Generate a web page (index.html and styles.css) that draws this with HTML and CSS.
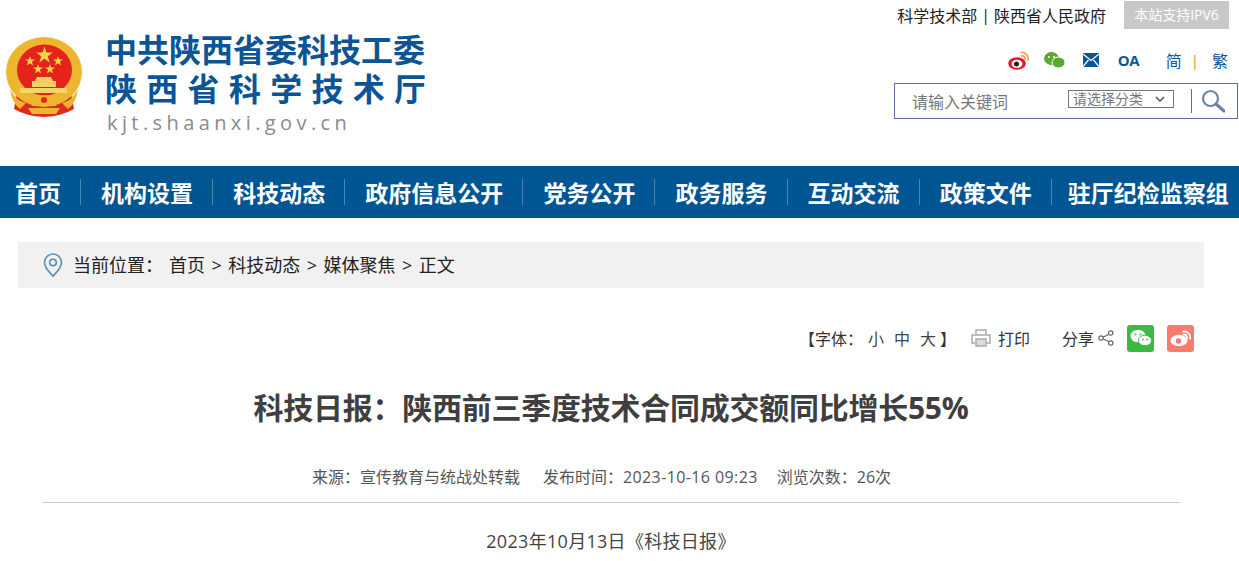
FILE: index.html
```html
<!doctype html>
<html lang="zh-CN">
<head>
    <meta charset="UTF-8">
    <meta name="viewport" content="width=device-width, initial-scale=1.0">
    <title>科技日报：陕西前三季度技术合同成交额同比增长55%</title>
    <link rel="stylesheet" href="styles.css">
</head>
<body>
    <header class="header">
        <div class="logo">
            <svg class="emblem" viewBox="0 0 76 82" width="76" height="82">
                <defs>
                    <path id="star" d="M0-10l2.400 7.100h7.500l-6 4.500 2.200 7.200-6.100-4.300-6.100 4.300 2.200-7.200-6-4.500h7.500z"/>
                </defs>
                <path d="M11 56 L8 72 Q20 79 38 80 Q56 79 68 72 L65 56 Z" fill="#e2271b"/>
                <ellipse cx="38" cy="35" rx="38" ry="35" fill="#eeb52f"/>
                <path d="M4 52 Q10 64 20 66 L14 72 Q6 66 4 52z M72 52 Q66 64 56 66 L62 72 Q70 66 72 52z" fill="#eeb52f"/>
                <ellipse cx="38.500" cy="33" rx="27.500" ry="25.500" fill="#e5231a"/>
                <use href="#star" transform="translate(38.500 18) scale(.85)" fill="#f8d24a"/>
                <use href="#star" transform="translate(24 24) scale(.5)" fill="#f8d24a"/>
                <use href="#star" transform="translate(52 24) scale(.5)" fill="#f8d24a"/>
                <use href="#star" transform="translate(32 32) scale(.5)" fill="#f8d24a"/>
                <use href="#star" transform="translate(44 32) scale(.5)" fill="#f8d24a"/>
                <path d="M29 44l2-4h14l2 4h3v6H26v-6z" fill="#f3cf66"/>
                <path d="M14 51h47v5H14z" fill="#f5d469"/>
                <path d="M24 64 C29 56 47 56 52 64 L50 69 H26 Z" fill="#eeb52f"/>
                <path d="M22 71h32l-4 6H26z" fill="#eeb52f"/>
                <circle cx="38" cy="63" r="3" fill="#e2271b"/>
            </svg>
            <div class="logo-text">
                <div class="logo-line">中共陕西省委科技工委</div>
                <div class="logo-line logo-line-wide">陕西省科学技术厅</div>
                <div class="logo-url">kjt.shaanxi.gov.cn</div>
            </div>
        </div>
        <div class="header-right">
            <div class="top-links">
                <span>科学技术部</span>
                <span class="top-sep">|</span>
                <span>陕西省人民政府</span>
                <span class="ipv6">本站支持IPV6</span>
            </div>
            <div class="social">
                <svg class="icon-weibo" viewBox="0 0 21 19" width="21" height="19">
                    <ellipse cx="9" cy="12.500" rx="8.800" ry="6.200" fill="#e6162d"/>
                    <ellipse cx="9" cy="12.800" rx="5.500" ry="4" fill="#fff"/>
                    <circle cx="8.500" cy="13" r="2.500" fill="#222"/>
                    <path d="M13 1.500a6.200 6.200 0 0 1 7 7.500M13.500 4.800a3 3 0 0 1 3.500 3.700" fill="none" stroke="#f3a04a" stroke-width="1.700" stroke-linecap="round"/>
                </svg>
                <svg class="icon-wechat" viewBox="0 0 21 16" width="21" height="16">
                    <ellipse cx="7.500" cy="6.500" rx="7.500" ry="6.500" fill="#5aa82f"/>
                    <ellipse cx="14.500" cy="10.500" rx="6.500" ry="5.500" fill="#5aa82f" stroke="#fff" stroke-width="1"/>
                    <circle cx="5" cy="5" r="1" fill="#fff"/>
                    <circle cx="10" cy="5" r="1" fill="#fff"/>
                </svg>
                <svg class="icon-mail" viewBox="0 0 16 14" width="16" height="14">
                    <path d="M0 0h16v14H0z" fill="#0b5595"/>
                    <path d="M0 1l8 6.500L16 1M0 13.500l5.500-6.500M16 13.500L10.500 7" fill="none" stroke="#fff" stroke-width="1.300"/>
                </svg>
                <span class="oa">OA</span>
                <span class="lang">简</span>
                <span class="lang-sep">|</span>
                <span class="lang lang-last">繁</span>
            </div>
            <div class="search">
                <span class="search-input">请输入关键词</span>
                <span class="search-select">请选择分类
                    <svg viewBox="0 0 10 6" width="10" height="6"><path d="M1 1l4 4 4-4" fill="none" stroke="#555" stroke-width="1.500"/></svg>
                </span>
                <span class="search-btn">
                    <svg viewBox="0 0 24 24" width="24" height="24">
                        <circle cx="9.500" cy="9.500" r="7.500" fill="none" stroke="#6f83a8" stroke-width="2.200"/>
                        <path d="M15 15l8 7" stroke="#6f83a8" stroke-width="3.200" stroke-linecap="round"/>
                    </svg>
                </span>
            </div>
        </div>
    </header>

    <nav class="nav">
        <a class="nav-item" href="#">首页</a>
        <a class="nav-item" href="#">机构设置</a>
        <a class="nav-item" href="#">科技动态</a>
        <a class="nav-item" href="#">政府信息公开</a>
        <a class="nav-item" href="#">党务公开</a>
        <a class="nav-item" href="#">政务服务</a>
        <a class="nav-item" href="#">互动交流</a>
        <a class="nav-item" href="#">政策文件</a>
        <a class="nav-item" href="#">驻厅纪检监察组</a>
    </nav>

    <div class="crumb">
        <svg viewBox="0 0 20 24" width="20" height="24">
            <path d="M10 1a8.500 8.500 0 0 0-8.500 8.500C1.500 15 7 20 10 23c3-3 8.500-8 8.500-13.500A8.500 8.500 0 0 0 10 1z" fill="none" stroke="#5c8db5" stroke-width="1.600"/>
            <circle cx="10" cy="9.500" r="3.300" fill="none" stroke="#5c8db5" stroke-width="1.600"/>
        </svg>
        <span class="crumb-label">当前位置：</span>
        <span class="crumb-path">首页 &gt; 科技动态 &gt; 媒体聚焦 &gt; 正文</span>
    </div>

    <div class="tools">
        <span class="font-size">【字体：<span class="font-opts">小</span><span class="font-opts">中</span><span class="font-opts">大</span><span class="font-end">】</span></span>
        <svg class="print-icon" viewBox="0 0 20 18" width="20" height="18">
            <path d="M5 5V1h10v4M4 14H1V6h18v8h-3" fill="none" stroke="#aaa" stroke-width="1.500"/>
            <path d="M5 10h10v7H5z" fill="#ddd" stroke="#aaa" stroke-width="1.500"/>
        </svg>
        <span class="print">打印</span>
        <span class="share">分享</span>
        <svg class="share-icon" viewBox="0 0 16 16" width="16" height="16">
            <path d="M12.500 3.500L3.500 8l9 4.500" fill="none" stroke="#666" stroke-width="1.200"/>
            <circle cx="12.700" cy="3" r="2.200" fill="#fff" stroke="#666" stroke-width="1.200"/>
            <circle cx="3" cy="8" r="2.200" fill="#fff" stroke="#666" stroke-width="1.200"/>
            <circle cx="12.700" cy="13" r="2.200" fill="#fff" stroke="#666" stroke-width="1.200"/>
        </svg>
        <span class="share-btn share-wechat">
            <svg viewBox="0 0 22 18" width="22" height="18">
                <ellipse cx="8" cy="7" rx="7.500" ry="6.300" fill="#fff"/>
                <ellipse cx="15" cy="11.500" rx="6.500" ry="5.300" fill="#fff" stroke="#3bba3f" stroke-width="1"/>
                <circle cx="5.500" cy="5.500" r="1" fill="#3bba3f"/>
                <circle cx="10.500" cy="5.500" r="1" fill="#3bba3f"/>
                <circle cx="13" cy="10.500" r=".9" fill="#3bba3f"/>
                <circle cx="17" cy="10.500" r=".9" fill="#3bba3f"/>
            </svg>
        </span>
        <span class="share-btn share-weibo">
            <svg viewBox="0 0 22 18" width="22" height="18">
                <ellipse cx="9" cy="11.500" rx="8.500" ry="5.800" fill="#fff"/>
                <circle cx="8.500" cy="12" r="2.800" fill="#f97b6c"/>
                <path d="M13 2.500a6 6 0 0 1 7 7.500M13.500 5.500a3 3 0 0 1 3.500 3.700" fill="none" stroke="#fff" stroke-width="1.700" stroke-linecap="round"/>
            </svg>
        </span>
    </div>

    <main class="article">
        <h1 class="title">科技日报：陕西前三季度技术合同成交额同比增长55%</h1>
        <div class="meta">
            <span>来源：宣传教育与统战处转载</span>
            <span>发布时间：<span class="meta-date">2023-10-16 09:23</span></span>
            <span class="meta-views">浏览次数：26次</span>
        </div>
        <p class="lead">2023年10月13日《科技日报》</p>
    </main>
</body>
</html>
```

FILE: styles.css
```css
* {
    box-sizing: border-box;
}

html,
body {
    height: 561px;
    overflow: hidden;
}

body {
    margin: 0;
    background: #fff;
    color: #333;
    font-family: "Open Sans", "Noto Sans CJK SC", sans-serif;
    font-size: 16px;
}

a {
    color: inherit;
    text-decoration: none;
}

/* header */
.header {
    display: flex;
    justify-content: space-between;
    height: 166px;
}

.logo {
    display: flex;
    flex-shrink: 0;
    padding: 33px 0 0 6px;
}

.emblem {
    margin-top: 4px;
}

.logo-text {
    margin-left: 23px;
    color: #0b5595;
    font-family: "Liberation Sans", "Noto Sans CJK SC", sans-serif;
    font-weight: 700;
}

.logo-line {
    height: 36px;
    font-size: 32px;
    line-height: 36px;
    white-space: nowrap;
}

.logo-line-wide {
    margin-top: 3px;
    letter-spacing: 9.300px;
}

.logo-url {
    margin: 1px 0 0 2px;
    color: #8a8a8a;
    font-family: "Open Sans", sans-serif;
    font-size: 20px;
    font-weight: 400;
    line-height: 28px;
    letter-spacing: 4.400px;
}

.header-right {
    display: flex;
    flex-direction: column;
    flex-shrink: 0;
    align-items: flex-end;
    width: 345px;
    padding: 1px 1px 0 0;
}

.top-links {
    display: flex;
    align-items: center;
    height: 28px;
    padding-right: 9px;
    color: #222;
    font-size: 16px;
    white-space: nowrap;
}

.top-sep {
    margin: 0 4px;
}

.ipv6 {
    width: 105px;
    height: 28px;
    margin-left: 18px;
    background: #c8c8c8;
    color: #fff;
    font-size: 14px;
    line-height: 28px;
    text-align: center;
}

.social {
    display: flex;
    align-items: center;
    height: 24px;
    margin-top: 19px;
    padding-right: 10px;
    color: #0b5595;
}

.icon-weibo {
    margin-right: 15px;
}

.icon-wechat {
    margin-right: 18px;
}

.icon-mail {
    margin-right: 19px;
}

.oa {
    width: 22px;
    font-size: 15px;
    font-weight: 700;
    letter-spacing: -.5px;
}

.lang {
    margin-left: 26px;
    font-size: 16px;
}

.lang-sep {
    margin-left: 9px;
    color: #e0912a;
    font-size: 15px;
}

.lang-last {
    margin-left: 13px;
}

.search {
    display: flex;
    align-items: center;
    width: 344px;
    height: 36px;
    margin-top: 11px;
    padding-left: 17px;
    border: 1px solid #5c6f9a;
}

.search-input {
    width: 156px;
    color: #777;
    font-size: 16px;
}

.search-select {
    display: flex;
    align-items: center;
    justify-content: space-between;
    width: 106px;
    height: 18px;
    margin-top: -5px;
    padding: 0 8px 0 4px;
    border: 1px solid #777;
    color: #777;
    font-size: 14px;
    line-height: 16px;
}

.search-btn {
    display: flex;
    align-items: center;
    height: 24px;
    margin-left: 17px;
    padding-left: 9px;
    border-left: 1px solid #5c6f9a;
}

/* nav */
.nav {
    display: flex;
    align-items: center;
    height: 52px;
    background: #005593;
}

.nav-item {
    padding: 0 19.100px 0 20px;
    border-right: 1px solid #4a83ad;
    color: #fff;
    font-family: "Noto Sans CJK SC", sans-serif;
    font-size: 23px;
    font-weight: 700;
    line-height: 26px;
    white-space: nowrap;
}

.nav-item:first-child {
    padding-left: 15px;
}

.nav-item:last-child {
    padding: 0 0 0 16px;
    border-right: none;
}

/* breadcrumb */
.crumb {
    display: flex;
    align-items: center;
    width: 1186px;
    height: 46px;
    margin: 24px 0 0 18px;
    padding-left: 25px;
    background: #f1f1f1;
    color: #222;
    font-size: 18px;
}

.crumb-label {
    margin: 0 6px 3px 10px;
}

.crumb-path {
    margin-bottom: 3px;
    word-spacing: 1.800px;
}

/* tools */
.tools {
    display: flex;
    align-items: center;
    justify-content: flex-end;
    height: 28px;
    margin-top: 36px;
    padding-right: 45px;
    font-size: 16px;
}

.font-opts {
    margin-left: 10px;
    color: #444;
}

.font-opts:first-of-type {
    margin-left: 5px;
}

.font-end {
    margin-left: 4px;
}

.print-icon {
    margin-left: 15px;
}

.print {
    margin-left: 7px;
}

.share {
    margin-left: 32px;
}

.share-icon {
    margin-left: 4px;
}

.share-btn {
    display: flex;
    align-items: center;
    justify-content: center;
    width: 27px;
    height: 27px;
    border-radius: 3px;
}

.share-wechat {
    margin-left: 13px;
    background: #3bba3f;
}

.share-weibo {
    margin-left: 13px;
    background: #f97b6c;
}

/* article */
.article {
    width: 1138px;
    margin: 0 0 0 42px;
}

.title {
    margin: 34px 0 0;
    color: #3f3f3f;
    font-size: 30px;
    font-weight: 700;
    line-height: 44px;
    letter-spacing: -.25px;
    text-align: center;
}

.meta {
    display: flex;
    justify-content: center;
    gap: 23px;
    height: 38px;
    margin-top: 35px;
    padding-right: 19px;
    border-bottom: 1px solid #ccc;
    color: #555;
    font-size: 16px;
    line-height: 24px;
}

.meta-date {
    letter-spacing: .4px;
}

.meta-views {
    margin-left: -4px;
}

.lead {
    margin: 24px 0 0;
    color: #444;
    font-size: 18px;
    line-height: 28px;
    letter-spacing: .3px;
    text-align: center;
}
```
